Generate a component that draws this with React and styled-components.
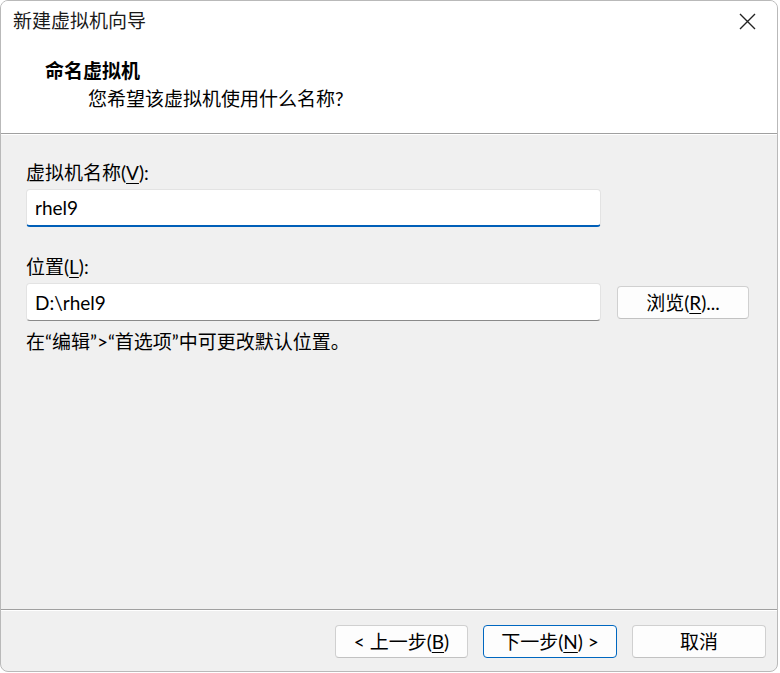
import React from 'react';
import styled, { createGlobalStyle } from 'styled-components';

const GlobalStyle = createGlobalStyle`
  html, body {
    margin: 0;
    padding: 0;
    background: #ffffff;
  }
  body {
    font-family: Lato, "Noto Sans CJK SC", sans-serif;
    font-size: 19px;
    color: #000000;
  }
`;

const Window = styled.div`
  box-sizing: border-box;
  width: 778px;
  height: 672px;
  border: 1px solid #b9b9b9;
  border-radius: 8px;
  overflow: hidden;
  display: flex;
  flex-direction: column;
  background: #f0f0f0;
`;

const TitleBar = styled.div`
  height: 40px;
  display: flex;
  align-items: center;
  justify-content: space-between;
  padding: 0 12px 0 12px;
  background: #ffffff;
`;

const TitleText = styled.div`
  font-size: 19px;
  line-height: 40px;
  color: #1a1a1a;
`;

const CloseButton = styled.div`
  width: 32px;
  height: 32px;
  display: flex;
  align-items: center;
  justify-content: center;
  margin-right: 2px;
`;

const Header = styled.div`
  background: #ffffff;
  padding: 17px 0 22px 44px;
  border-bottom: 1px solid #a0a0a0;
  box-shadow: 0 1px 0 #ffffff;
`;

const HeaderTitle = styled.div`
  font-weight: 700;
  font-size: 19px;
  line-height: 25px;
`;

const HeaderSub = styled.div`
  font-size: 19px;
  line-height: 25px;
  margin-top: 3px;
  padding-left: 43px;
`;

const Content = styled.div`
  flex: 1;
  padding: 25px 0 0 25px;
  margin-top: 1px;
  display: grid;
  grid-template-columns: 575px 132px;
  column-gap: 16px;
  align-content: start;
  align-items: center;
`;

const Label = styled.div`
  grid-column: 1 / -1;
  line-height: 26px;
  margin-top: ${(p) => p.$top || 0}px;
  margin-bottom: 3px;
`;

const Input = styled.div`
  box-sizing: border-box;
  height: 38px;
  background: #ffffff;
  border: 1px solid #e3e3e3;
  border-bottom: ${(p) => (p.$focused ? '2px solid #005fb8' : '1px solid #8a8a8a')};
  border-radius: 4px;
  padding: 0 8px;
  display: flex;
  align-items: center;
  font-size: 19px;
`;

const Button = styled.div`
  box-sizing: border-box;
  width: ${(p) => p.$width || 132}px;
  height: 33px;
  display: flex;
  align-items: center;
  justify-content: center;
  background: #fdfdfd;
  border: 1px solid ${(p) => (p.$primary ? '#0067c0' : '#d0d0d0')};
  border-bottom-color: ${(p) => (p.$primary ? '#0067c0' : '#c2c2c2')};
  border-radius: 4px;
  font-size: 19px;
  line-height: 1;
  color: #000000;
  white-space: pre;
`;

const Hint = styled.div`
  grid-column: 1 / -1;
  line-height: 26px;
  margin-top: 8px;
`;

const Footer = styled.div`
  border-top: 1px solid #a0a0a0;
  box-shadow: inset 0 1px 0 #ffffff;
  height: 62px;
  display: flex;
  justify-content: flex-end;
  align-items: flex-start;
  gap: 15px;
  padding: 15px 11px 0 0;
  box-sizing: border-box;
`;

const Key = styled.span`
  text-decoration: underline;
  text-underline-offset: 3px;
`;

const CloseIcon = () => (
  <svg width="17" height="17" viewBox="0 0 17 17">
    <path d="M1 1 L16 16 M16 1 L1 16" stroke="#222" strokeWidth="1.4" fill="none" />
  </svg>
);

export default function App() {
  return (
    <>
      <GlobalStyle />
      <Window>
        <TitleBar>
          <TitleText>新建虚拟机向导</TitleText>
          <CloseButton>
            <CloseIcon />
          </CloseButton>
        </TitleBar>
        <Header>
          <HeaderTitle>命名虚拟机</HeaderTitle>
          <HeaderSub>您希望该虚拟机使用什么名称?</HeaderSub>
        </Header>
        <Content>
          <Label>
            虚拟机名称(<Key>V</Key>):
          </Label>
          <Input $focused>rhel9</Input>
          <div />
          <Label $top={27}>
            位置(<Key>L</Key>):
          </Label>
          <Input>D:\rhel9</Input>
          <Button>
            浏览(<Key>R</Key>)...
          </Button>
          <Hint>在“编辑”&gt;“首选项”中可更改默认位置。</Hint>
        </Content>
        <Footer>
          <Button $width={133}>
            {'< 上一步('}<Key>B</Key>)
          </Button>
          <Button $width={134} $primary>
            下一步(<Key>N</Key>){' >'}
          </Button>
          <Button $width={134}>取消</Button>
        </Footer>
      </Window>
    </>
  );
}
